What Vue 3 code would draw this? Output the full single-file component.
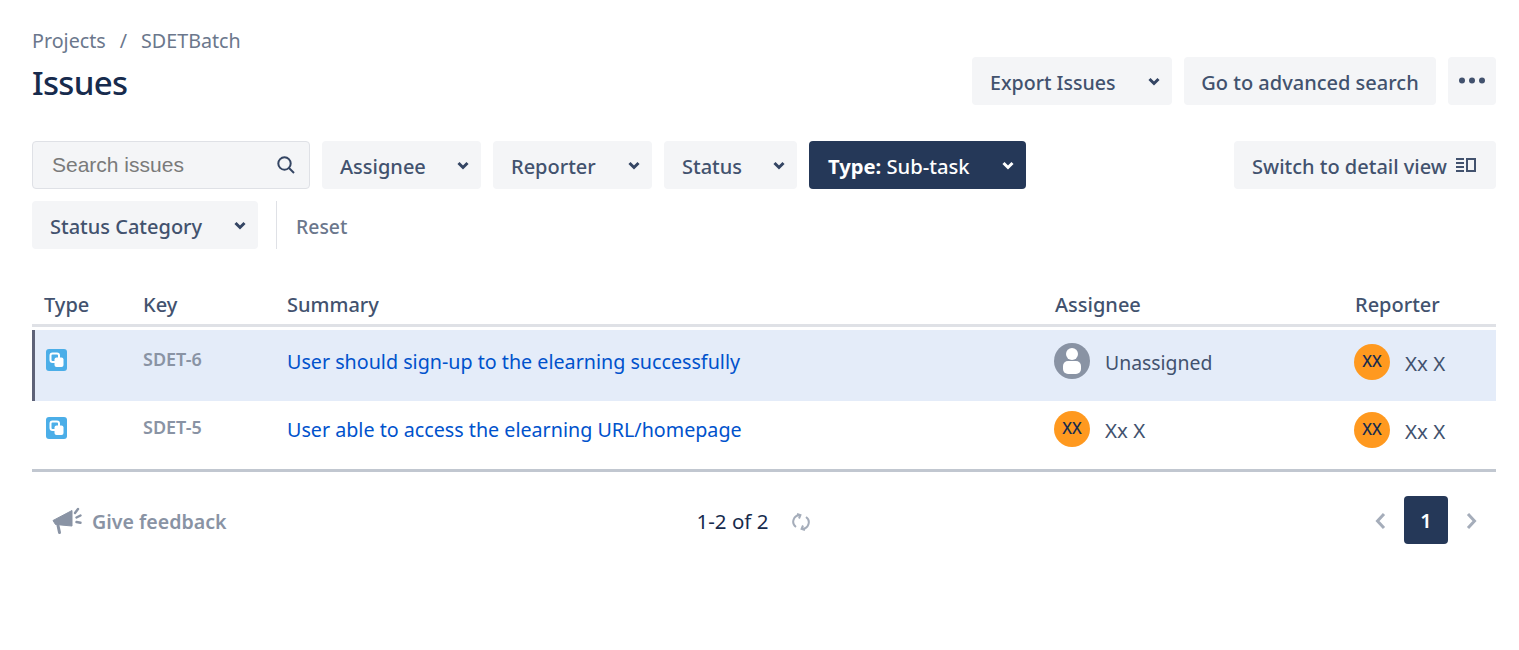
<script setup>
const filters = [
  { label: 'Assignee', cls: 'w-assignee' },
  { label: 'Reporter', cls: 'w-reporter' },
  { label: 'Status', cls: 'w-status' }
]
const rows = [
  { key: 'SDET-6', summary: 'User should sign-up to the elearning successfully', assignee: 'Unassigned', selected: true },
  { key: 'SDET-5', summary: 'User able to access the elearning URL/homepage', assignee: 'Xx X', selected: false }
]
</script>

<template>
  <div class="page">
    <nav class="crumbs"><span>Projects</span><span class="slash">/</span><span>SDETBatch</span></nav>
    <header class="head">
      <h1>Issues</h1>
      <div class="actions">
        <button class="btn w-export"><span>Export Issues</span><svg class="chev" viewBox="0 0 24 24"><path d="M7.500 10l4.500 4.500 4.500-4.500" /></svg></button>
        <button class="btn w-adv"><span>Go to advanced search</span></button>
        <button class="btn w-more" aria-label="More">
          <svg width="28" height="8" viewBox="0 0 28 8"><circle cx="4" cy="3.500" r="3" /><circle cx="14" cy="3.500" r="3" /><circle cx="24" cy="3.500" r="3" /></svg>
        </button>
      </div>
    </header>

    <section class="filters">
      <div class="filter-line">
        <label class="search">
          <input placeholder="Search issues" />
          <svg width="20" height="20" viewBox="0 0 20 20"><circle cx="8.500" cy="8.500" r="6.200" /><path d="M13 13l5 5" /></svg>
        </label>
        <button v-for="f in filters" :key="f.label" class="btn" :class="f.cls"><span>{{ f.label }}</span><svg class="chev" viewBox="0 0 24 24"><path d="M7.500 10l4.500 4.500 4.500-4.500" /></svg></button>
        <button class="btn active w-type"><span><b>Type:</b> Sub-task</span><svg class="chev" viewBox="0 0 24 24"><path d="M7.500 10l4.500 4.500 4.500-4.500" /></svg></button>
        <button class="btn w-switch switch">
          <span>Switch to detail view</span>
          <svg class="detail" width="20" height="14" viewBox="0 0 20 14"><path d="M0 1h8M0 5h8M0 9h8M0 13h8" /><rect x="11" y="1" width="8" height="12" /></svg>
        </button>
      </div>
      <div class="filter-line second">
        <button class="btn w-cat"><span>Status Category</span><svg class="chev" viewBox="0 0 24 24"><path d="M7.500 10l4.500 4.500 4.500-4.500" /></svg></button>
        <span class="divider"></span>
        <span class="reset">Reset</span>
      </div>
    </section>

    <section class="table">
      <div class="grid th">
        <div>Type</div><div>Key</div><div>Summary</div><div>Assignee</div><div>Reporter</div>
      </div>
      <div v-for="r in rows" :key="r.key" class="grid row" :class="{ selected: r.selected }">
        <div class="type-cell">
          <svg width="21" height="22" viewBox="0 0 21 22">
            <rect width="21" height="22" rx="3" fill="#4BAEE8" />
            <rect x="4.500" y="4.500" width="8.500" height="8.500" rx="2" fill="#4BAEE8" stroke="#fff" stroke-width="2" />
            <rect x="8.500" y="8.500" width="9" height="9.500" rx="2" fill="#fff" />
          </svg>
        </div>
        <div class="key">{{ r.key }}</div>
        <div class="summary"><a>{{ r.summary }}</a></div>
        <div class="person assignee">
          <svg v-if="r.selected" class="ua" width="36" height="36" viewBox="0 0 36 36">
            <circle cx="18" cy="18" r="18" fill="#8993A4" />
            <circle cx="18" cy="11" r="6" fill="#fff" />
            <rect x="9" y="18" width="18" height="13" rx="5" fill="#fff" />
          </svg>
          <span v-else class="avatar">XX</span>
          <span class="name" :class="{ unassigned: r.selected }">{{ r.assignee }}</span>
        </div>
        <div class="person reporter">
          <span class="avatar">XX</span>
          <span class="name">Xx X</span>
        </div>
      </div>
    </section>

    <footer class="foot">
      <div class="feedback">
        <svg width="32" height="32" viewBox="0 0 32 32">
          <path d="M1 16.500L20 6.500v15.500L3.500 20.500z" fill="#8993A4" stroke="#8993A4" stroke-linejoin="round" />
          <path d="M6 21.500l1.500 7" stroke="#8993A4" stroke-width="3" stroke-linecap="round" fill="none" />
          <path d="M23 9l3-4M24.500 13.500l4-2M24.500 18l4 .8" stroke="#8993A4" stroke-width="2.400" stroke-linecap="round" fill="none" />
        </svg>
        <span>Give feedback</span>
      </div>
      <div class="count">
        <span>1-2 of 2</span>
        <svg width="20" height="20" viewBox="0 0 20 20" fill="none" stroke="#A5ADBA" stroke-width="2">
          <path d="M9 3.200A6.500 6.500 0 0 0 5 15" />
          <path d="M11 16.800A6.500 6.500 0 0 0 15 5" />
          <path d="M6 2l3.400 1.200L8 6.500" /><path d="M14 18l-3.400-1.200L12 13.500" />
        </svg>
      </div>
      <div class="pager">
        <svg width="24" height="24" viewBox="0 0 24 24"><path d="M15 5l-6.500 7 6.500 7" /></svg>
        <span class="page-one">1</span>
        <svg width="24" height="24" viewBox="0 0 24 24"><path d="M9 5l6.500 7-6.500 7" /></svg>
      </div>
    </footer>
  </div>
</template>

<style>
html, body { margin: 0; background: #fff; }
</style>

<style scoped>
.page {
  padding: 27px 23px 0 32px;
  height: 623px;
  font-family: "Noto Sans", "Open Sans", sans-serif;
  font-size: 20px;
  color: #42526e;
  overflow: hidden;
}
.crumbs {
  display: flex;
  gap: 14px;
  height: 30px;
  font-size: 19.700px;
  line-height: 28px;
  color: #6b778c;
}
.head {
  display: flex;
  justify-content: space-between;
  height: 48px;
}
h1 {
  margin: 0;
  font-size: 33px;
  font-weight: 500;
  letter-spacing: -0.700px;
  line-height: 52px;
  color: #172b4d;
}
.actions, .filter-line { display: flex; gap: 12px; }
.btn {
  display: flex;
  align-items: center;
  justify-content: space-between;
  height: 48px;
  box-sizing: border-box;
  padding: 0 6px 0 18px;
  border: 0;
  border-radius: 4px;
  background: #f4f5f7;
  color: #42526e;
  font: 500 20px "Noto Sans", "Open Sans", sans-serif;
}
.btn span { margin-top: 2px; }
.chev { width: 24px; height: 24px; fill: none; stroke: #344563; stroke-width: 3; flex: none; }
.active { background: #253858; color: #fff; padding-left: 19px; }
.active .chev { stroke: #fff; }
.active b { font-weight: 700; }
.active span { font-size: 20.200px; }
.w-export { width: 200px; }
.w-export span { font-size: 19.600px; }
.w-adv { width: 252px; justify-content: center; padding: 0; }
.w-more { width: 48px; justify-content: center; padding: 0; }
.w-more svg { fill: #42526e; }
.w-assignee, .w-reporter { width: 159px; }
.w-status { width: 133px; }
.w-type { width: 217px; }
.w-switch { width: 262px; padding: 0 18px; justify-content: flex-start; }
.w-cat { width: 226px; }
.switch { margin-left: auto; }
.detail { fill: none; stroke: #42526e; stroke-width: 2; margin-left: 9px; flex: none; }
.filters { margin-top: 36px; }
.second { margin-top: 12px; align-items: stretch; height: 48px; }
.search {
  width: 278px;
  height: 48px;
  box-sizing: border-box;
  display: flex;
  align-items: center;
  padding: 0 13px 0 19px;
  border: 1px solid #dfe1e6;
  border-radius: 4px;
  background: #f4f5f7;
}
.search input {
  flex: 1;
  min-width: 0;
  border: 0;
  outline: 0;
  background: transparent;
  padding: 0;
  font: 21px "Liberation Sans", Arial, sans-serif;
  color: #42526e;
}
.search input::placeholder { color: #7a7a7a; opacity: 1; }
.search svg { fill: none; stroke: #344563; stroke-width: 2; flex: none; }
.divider { width: 1px; margin-left: 6px; background: #dfe1e6; }
.reset { margin-left: 7px; font-size: 19.400px; line-height: 52px; color: #6b778c; font-weight: 500; }
.table { margin-top: 38px; }
.grid {
  display: grid;
  grid-template-columns: 99px 144px 768px 300px 153px;
}
.th {
  height: 40px;
  box-sizing: border-box;
  border-bottom: 3px solid #dfe1e6;
  line-height: 36px;
  font-weight: 500;
  margin-bottom: 3px;
}
.th > div { padding-left: 12px; }
.row { height: 68px; box-sizing: border-box; padding-top: 10px; }
.row > div { padding-left: 12px; }
.row.selected {
  height: 71px;
  padding-top: 13px;
  background: #e4ecf9;
  box-shadow: inset 3px 0 0 #5e6278;
}
.row:not(.selected) { border-bottom: 3px solid #c1c7d0; height: 71px; }
.type-cell { padding-top: 6px; }
.type-cell svg { display: block; margin-left: 2px; }
.key { font-size: 18px; font-weight: 600; color: #8993a4; line-height: 28px; padding-top: 2px; }
.summary { font-size: 19.700px; line-height: 38px; }
.summary a { color: #0052cc; }
.person { display: flex; align-items: flex-start; margin-left: -1px; }
.reporter { margin-left: 0; padding-left: 11px !important; padding-top: 1px; }
.name { margin-left: 15px; font-size: 20.500px; line-height: 38px; white-space: nowrap; }
.name.unassigned { font-size: 19.400px; line-height: 40px; }
.ua { flex: none; }
.avatar {
  flex: none;
  width: 36px;
  height: 36px;
  border-radius: 50%;
  background: #ff991f;
  color: #172b4d;
  font-size: 16px;
  font-weight: 500;
  line-height: 34px;
  text-align: center;
}
.foot {
  display: grid;
  grid-template-columns: 1fr 1fr 1fr;
  align-items: center;
  height: 48px;
  margin-top: 24px;
}
.feedback { display: flex; align-items: center; gap: 8px; padding-left: 20px; color: #8993a4; font-weight: 600; font-size: 19.600px; }
.feedback span { margin-top: 2px; }
.count { display: flex; align-items: center; gap: 23px; justify-content: center; color: #172b4d; padding-right: 20px; font-size: 20.500px; }
.count span { margin-top: 2px; }
.count svg { margin-top: 3px; }
.pager { display: flex; align-items: center; justify-content: flex-end; gap: 11px; padding-right: 13px; }
.pager svg { fill: none; stroke: #a5adba; stroke-width: 3; margin-top: 2px; }
.page-one {
  width: 44px;
  height: 48px;
  line-height: 50px;
  text-align: center;
  border-radius: 4px;
  background: #253858;
  color: #fff;
  font-weight: 600;
}
</style>
